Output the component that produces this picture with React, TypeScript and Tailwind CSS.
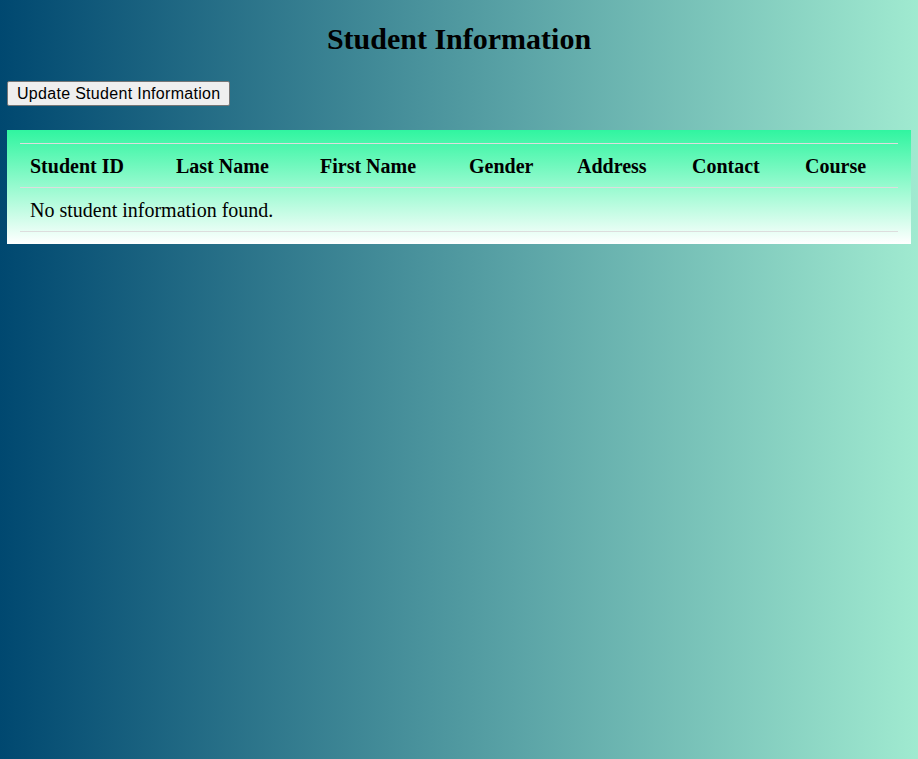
import React from 'react';

const columns = [
  { label: 'Student ID', width: 'w-[146px]' },
  { label: 'Last Name', width: 'w-[144px]' },
  { label: 'First Name', width: 'w-[149px]' },
  { label: 'Gender', width: 'w-[108px]' },
  { label: 'Address', width: 'w-[115px]' },
  { label: 'Contact', width: 'w-[113px]' },
  { label: 'Course', width: 'w-[103px]' },
];

export default function App() {
  const students: string[][] = [];

  return (
    <div className="min-h-screen w-full bg-[linear-gradient(to_right,#004870,#a0ead0)] px-[7px] pt-[21px] font-['Liberation_Serif','Times_New_Roman',serif] text-black">
      <h1 className="text-center text-[30px] font-bold leading-[35px]">Student Information</h1>

      <button className="mt-[25px] h-[25px] rounded-[2px] border border-[#767676] bg-[#efefef] px-[9px] font-['Liberation_Sans',Arial,sans-serif] text-[16px] leading-[21px] tracking-[0.3px] text-black">
        Update Student Information
      </button>

      <div className="mt-[24px] bg-[linear-gradient(to_bottom,#30f5a0,#ffffff)] px-[13px] pt-[13px] pb-[12px]">
        <table className="w-full table-fixed border-collapse border-t border-[#dddddd] text-[20px] leading-[23px]">
          <colgroup>
            {columns.map((c) => (
              <col key={c.label} className={c.width} />
            ))}
          </colgroup>
          <thead>
            <tr>
              {columns.map((c) => (
                <th key={c.label} className="border-b border-[#dddddd] px-[10px] pt-[11px] pb-[9px] text-left font-bold">
                  {c.label}
                </th>
              ))}
            </tr>
          </thead>
          <tbody>
            {students.length === 0 ? (
              <tr>
                <td colSpan={7} className="border-b border-[#dddddd] px-[10px] pt-[11px] pb-[9px]">
                  No student information found.
                </td>
              </tr>
            ) : (
              students.map((row, i) => (
                <tr key={i}>
                  {row.map((cell, j) => (
                    <td key={j} className="border-b border-[#dddddd] px-[10px] pt-[11px] pb-[9px]">
                      {cell}
                    </td>
                  ))}
                </tr>
              ))
            )}
          </tbody>
        </table>
      </div>
    </div>
  );
}
